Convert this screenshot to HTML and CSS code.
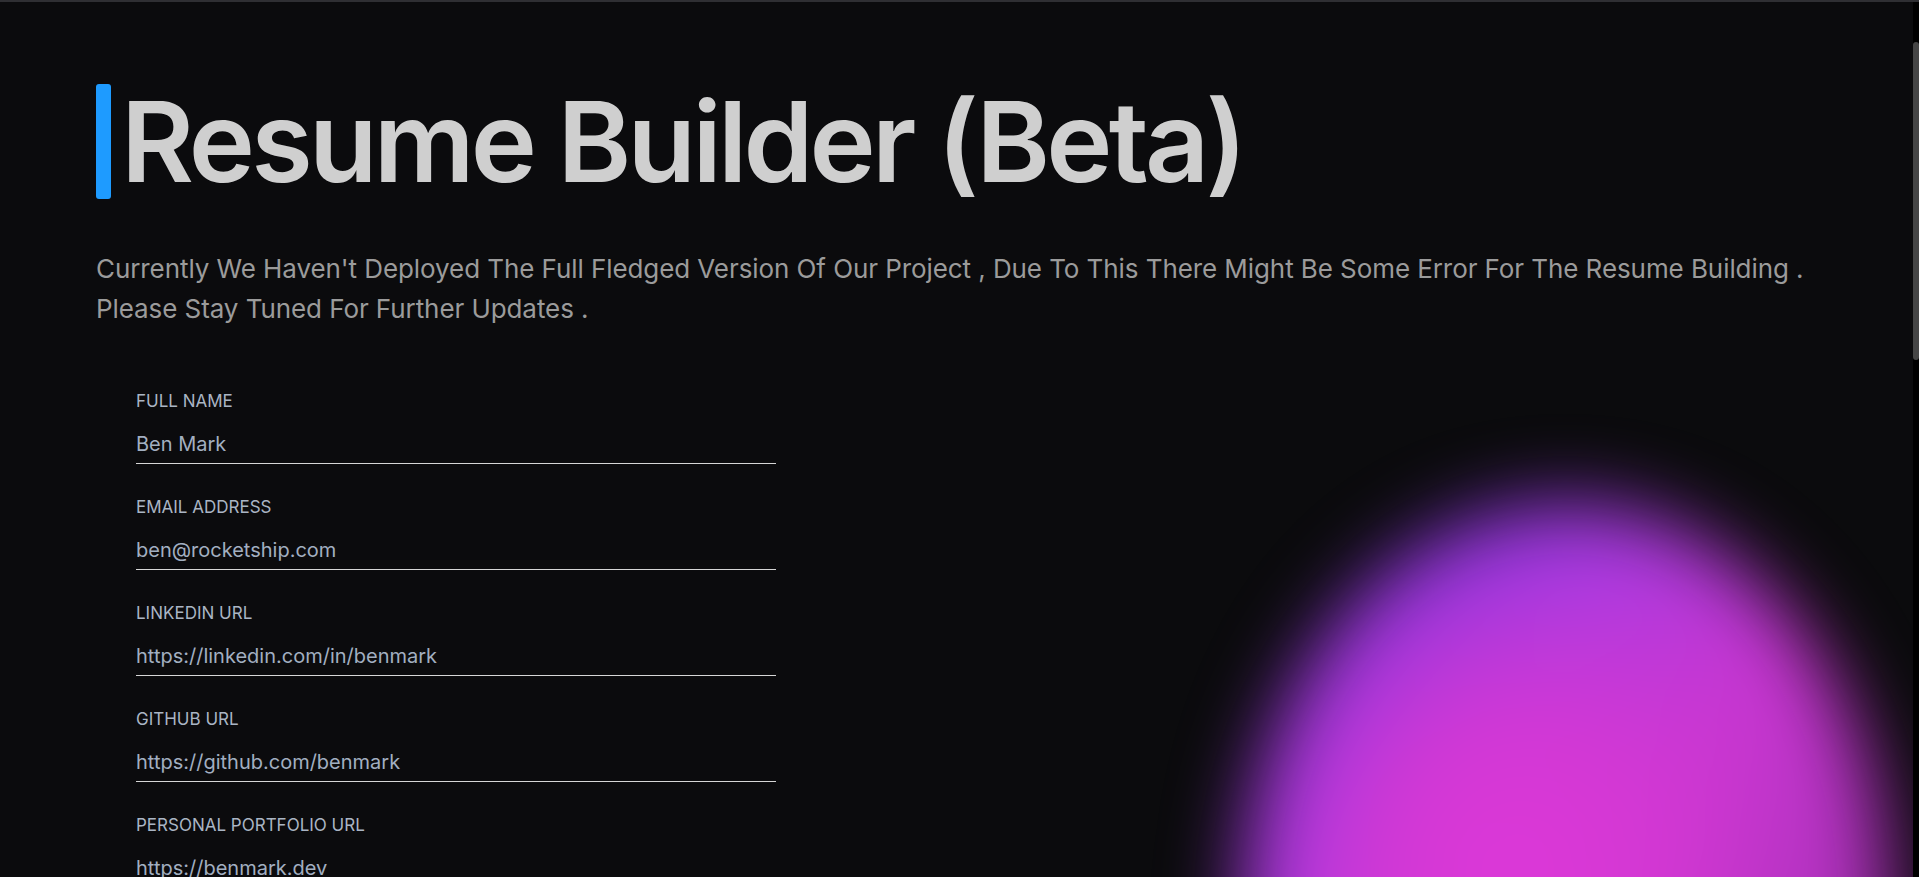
FILE: index.html
```html
<!DOCTYPE html>
<html lang="en">
<head>
<meta charset="utf-8">
<title>Resume Builder (Beta)</title>
<link rel="stylesheet" href="styles.css">
</head>
<body>
<div class="frame">
  <main class="page">
    <div class="blob"></div>
    <h1 class="title"><span class="title-bar"></span><span class="title-text">Resume Builder (Beta)</span></h1>
    <p class="subtitle">Currently We Haven't Deployed The Full Fledged Version Of Our Project , Due To This There Might Be Some Error For The Resume Building . Please Stay Tuned For Further Updates .</p>
    <form class="form">
      <div class="field">
        <label class="field-label">Full Name</label>
        <input class="field-input" type="text" value="Ben Mark">
      </div>
      <div class="field">
        <label class="field-label">Email Address</label>
        <input class="field-input" type="text" value="ben@rocketship.com">
      </div>
      <div class="field">
        <label class="field-label">LinkedIn URL</label>
        <input class="field-input" type="text" value="https://linkedin.com/in/benmark">
      </div>
      <div class="field">
        <label class="field-label">GitHub URL</label>
        <input class="field-input" type="text" value="https://github.com/benmark">
      </div>
      <div class="field">
        <label class="field-label">Personal Portfolio URL</label>
        <input class="field-input" type="text" value="https://benmark.dev">
      </div>
    </form>
  </main>
  <div class="scrollbar"><div class="scrollbar-thumb"></div></div>
</div>
</body>
</html>
```
FILE: styles.css
```css
html, body {
  margin: 0;
  padding: 0;
  height: 100%;
  overflow: hidden;
  background: #0b0b0d;
}

body {
  font-family: Inter, "Liberation Sans", sans-serif;
}

.frame {
  display: flex;
  height: 100%;
  box-sizing: border-box;
  border-top: 2px solid #2f2f33;
}

.page {
  position: relative;
  flex: 1;
  padding: 82px 0 0 96px;
  overflow: hidden;
}

.blob {
  position: absolute;
  left: 1240px;
  top: 500px;
  width: 650px;
  height: 820px;
  border-radius: 50%;
  background:
    radial-gradient(ellipse 45% 40% at 42% 45%, rgba(222, 56, 216, 1) 0%, rgba(214, 56, 212, 0.9) 45%, rgba(214, 56, 212, 0) 100%),
    linear-gradient(125deg, #6a2ccc 0%, #8e36dc 22%, #a83ae0 34%, #c636d0 52%, #b232c0 70%, #952ca8 100%);
  filter: blur(38px);
}

.title {
  position: relative;
  display: flex;
  align-items: stretch;
  gap: 10px;
  margin: 0;
  height: 115px;
  font-size: 112px;
  line-height: 115px;
  font-weight: 600;
  letter-spacing: -0.034em;
  color: #cfcfcf;
}

.title-bar {
  width: 15px;
  border-radius: 3px;
  background: #1e9bff;
}

.subtitle {
  position: relative;
  margin: 50px 0 0 0;
  padding-right: 60px;
  font-size: 26px;
  line-height: 40px;
  letter-spacing: -0.003em;
  color: #9b9b9b;
}

.form {
  position: relative;
  display: flex;
  flex-direction: column;
  gap: 34px;
  margin-top: 63px;
  padding-left: 40px;
}

.field {
  display: flex;
  flex-direction: column;
  gap: 20px;
  width: 640px;
}

.field-label {
  font-size: 17px;
  line-height: 18px;
  text-transform: uppercase;
  color: #aab5c4;
}

.field-input {
  box-sizing: border-box;
  height: 34px;
  padding: 0 0 6px 0;
  border: 0;
  border-bottom: 1px solid #d6d6d6;
  background: transparent;
  font-family: Inter, "Liberation Sans", sans-serif;
  font-size: 20px;
  color: #a2afc1;
  outline: none;
}

.scrollbar {
  width: 6px;
  flex: none;
  background: #000;
}

.scrollbar-thumb {
  margin-top: 40px;
  height: 318px;
  border-radius: 3px;
  background: #464646;
}
```
